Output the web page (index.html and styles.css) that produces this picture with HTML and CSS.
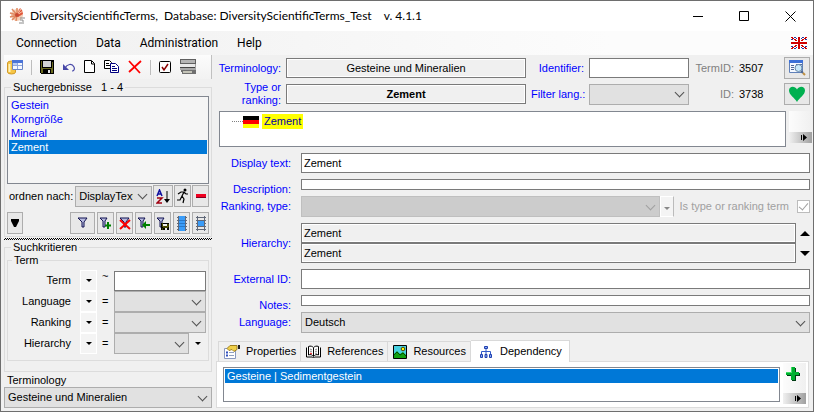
FILE: index.html
```html
<!DOCTYPE html>
<html lang="en">
<head>
    <meta charset="UTF-8">
    <meta name="viewport" content="width=device-width, initial-scale=1.0">
    <title>DiversityScientificTerms</title>
    <link rel="stylesheet" href="styles.css">
</head>
<body>
<div class="window">
    <header class="titlebar">
        <svg class="app-icon" width="17" height="17" viewBox="0 0 17 17">
            <circle cx="8" cy="7" r="6" fill="#f3cdb4"/>
            <path d="M8 7L1 5M8 7L3 1M8 7L8 0M8 7L1 9M8 7L3 12M8 7L7 13" stroke="#e08a62" stroke-width="1.5"/>
            <path d="M8 6L11 0L13 2L14 6L9 9Z" fill="#e0563a"/>
            <path d="M8 7L14 3M8 7L12 1" stroke="#f7c9b0"/>
            <circle cx="8" cy="7" r="2" fill="#c84a32"/>
            <path d="M11 10h5M11 12h3M14 12v4M10 15h3" stroke="#8a8a8a"/>
        </svg>
        <h1>DiversityScientificTerms,&nbsp; Database: DiversityScientificTerms_Test &nbsp;&nbsp; v. 4.1.1</h1>
        <button class="win-btn" aria-label="Minimize"><svg width="11" height="11"><path d="M0 5.5h10" stroke="#000"/></svg></button>
        <button class="win-btn" aria-label="Maximize"><svg width="11" height="11"><path d="M.5.5h9v9h-9z" fill="none" stroke="#000"/></svg></button>
        <button class="win-btn" aria-label="Close"><svg width="11" height="11"><path d="M.5.5l10 10M10.500 .5l-10 10" stroke="#000"/></svg></button>
    </header>

    <nav class="menubar">
        <a href="#">Connection</a>
        <a href="#">Data</a>
        <a href="#">Administration</a>
        <a href="#">Help</a>
        <button class="flag-btn" aria-label="English">
            <svg width="16" height="12" viewBox="0 0 16 12" shape-rendering="crispEdges">
                <path fill="#fff" d="M0 0h16v12H0z"/>
                <path fill="#2038a0" d="M3 0h2v1H3zM11 0h2v1h-2zM0 2h2v1H0zM14 2h2v1h-2zM0 9h2v1H0zM14 9h2v1h-2zM3 11h2v1H3zM11 11h2v1h-2zM5 1h1v1H5zM10 1h1v1h-1zM5 10h1v1H5zM10 10h1v1h-1z"/>
                <path fill="#d00000" d="M0 0h2v1H0zM1 1h2v1H1zM3 2h2v1H3zM4 3h2v1H4zM14 0h2v1h-2zM13 1h2v1h-2zM11 2h2v1h-2zM10 3h2v1h-2zM0 11h2v1H0zM1 10h2v1H1zM3 9h2v1H3zM4 8h2v1H4zM14 11h2v1h-2zM13 10h2v1h-2zM11 9h2v1h-2zM10 8h2v1h-2zM7 0h2v12H7zM0 5h16v2H0z"/>
            </svg>
        </button>
    </nav>

    <div class="content">
        <aside class="sidebar">
            <div class="toolbar">
                <button aria-label="Database">
                    <svg width="16" height="16" viewBox="0 0 16 16">
                        <path d="M.5 4q0-2 4-2t4 2v9q0 2-4 2t-4-2z" fill="#f6c544" stroke="#d09a2c"/>
                        <path d="M2.500 5v8" stroke="#fff2b8" stroke-width="2"/>
                        <path d="M5.500 1.500h10v9h-10z" fill="#f4f8ff" stroke="#6a86c8"/>
                        <path d="M5 1h11v3H5z" fill="#4a74d8"/><path d="M6 6.500h9M10.500 4v6" stroke="#8ea4dc"/>
                        <path d="M6 4h4v2H6z" fill="#b8ccf4"/>
                    </svg>
                </button>
                <span class="separator"></span>
                <button aria-label="Save">
                    <svg width="14" height="14" viewBox="0 0 14 14" shape-rendering="crispEdges">
                        <path fill="#000" d="M0 0h14v14H1l-1-1z"/><path fill="#6c6c20" d="M1 1h1v7h10V2h1v11h-2V9H3v4H1z"/>
                        <path fill="#d4d4d4" d="M3 1h8v6H3z"/><path fill="#e4e4e4" d="M8 10h2v3H8z"/>
                    </svg>
                </button>
                <button aria-label="Undo">
                    <svg width="14" height="14" viewBox="0 0 14 14">
                        <path d="M3 8c2-4 7-5 9-1 1 2 0 4-2 4" fill="none" stroke="#4848a8" stroke-width="1.200"/>
                        <path fill="#4848a8" d="M1 4v6h6z"/>
                    </svg>
                </button>
                <button aria-label="New">
                    <svg width="12" height="14" viewBox="0 0 12 14">
                        <path d="M.5.5h7l3 3v9H.5z" fill="#fff" stroke="#000"/><path d="M7.500 1v3h3" fill="none" stroke="#000"/>
                    </svg>
                </button>
                <button aria-label="Copy">
                    <svg width="16" height="14" viewBox="0 0 16 14">
                        <path d="M.5.5h5l2 2v6h-7z" fill="#fff" stroke="#000"/><path d="M2 3.500h3M2 5.500h4" stroke="#000"/>
                        <path d="M6.500 3.500h5l3 3v6h-8z" fill="#fff" stroke="#000080"/><path d="M8 6.500h3M8 8.500h5M8 10.500h5" stroke="#000080"/>
                    </svg>
                </button>
                <button aria-label="Delete">
                    <svg width="14" height="14" viewBox="0 0 14 14"><path d="M1 1l11 12M13 1L1 12" stroke="#f00" stroke-width="1.800"/></svg>
                </button>
                <span class="separator"></span>
                <button aria-label="Check">
                    <svg width="13" height="13" viewBox="0 0 13 13">
                        <rect x=".5" y=".5" width="11" height="11" rx="1" fill="#fff" stroke="#000"/><path d="M3 6l2 3 4-6" fill="none" stroke="#8b0000" stroke-width="1.500"/>
                    </svg>
                </button>
                <button aria-label="Print">
                    <svg width="16" height="16" viewBox="0 0 16 16" shape-rendering="crispEdges">
                        <path fill="#606060" d="M0 0h16v5H0z"/><path fill="#b4b4b4" d="M1 1h14v3H1z"/>
                        <path fill="#e8e8e8" d="M0 5h15v3H0z"/><path fill="#a0a0a0" d="M15 5h1v6h-1z"/>
                        <path fill="#444" d="M0 8h15v1H0z"/><path fill="#a8a8a8" d="M0 9h16v2H0z"/>
                        <path fill="#707070" d="M1 11h15v4H2v-2H1z"/><path fill="#c4c4b8" d="M3 12h9v2H3z"/>
                    </svg>
                </button>
            </div>

            <fieldset class="group results">
                <legend>Suchergebnisse&nbsp;&nbsp; 1 - 4</legend>
                <select class="listbox result-list" size="5" aria-label="Suchergebnisse">
                    <option>Gestein</option>
                    <option>Korngröße</option>
                    <option>Mineral</option>
                    <option selected>Zement</option>
                </select>
                <div class="order-row">
                    <label for="order">ordnen nach:</label>
                    <span class="combo">
                        <select id="order"><option>DisplayText</option></select>
                    </span>
                    <button class="btn wide" aria-label="Sort A to Z">
                        <svg width="14" height="15" viewBox="0 0 14 15">
                            <path d="M1 7l2.500-6L6 7M2 5h3" fill="none" stroke="#1010a0" stroke-width="1.500"/>
                            <path d="M1 9h5l-5 5h5" fill="none" stroke="#a00010" stroke-width="1.500"/>
                            <path d="M11 2v10" stroke="#000"/><path d="M8 10h6l-3 4z"/>
                        </svg>
                    </button>
                    <button class="btn" aria-label="Run">
                        <svg width="13" height="16" viewBox="0 0 13 16">
                            <circle cx="9" cy="2" r="1.500"/>
                            <path d="M8 4L6 8l2 3-1 4M6 8l-2 4H1M2 6l3-2h3l2 2h2" fill="none" stroke="#000" stroke-width="1.200"/>
                        </svg>
                    </button>
                    <button class="btn" aria-label="Remove">
                        <svg width="10" height="4"><path fill="#800020" d="M0 1h10v3H0z"/><path fill="#f00020" d="M0 0h10v3H0z"/></svg>
                    </button>
                </div>
                <div class="filter-row">
                    <button class="btn first" aria-label="More"><svg width="8" height="8"><path d="M0 0h8v2L5 8H3L0 2z"/></svg></button>
                    <button class="btn wider" aria-label="Filter">
                        <svg width="12" height="12" viewBox="0 0 12 12"><path d="M1 1h9L7 5v5H5V5z" fill="#b8bce0" stroke="#101050"/></svg>
                    </button>
                    <button class="btn" aria-label="Add to filter">
                        <svg width="13" height="13" viewBox="0 0 13 13"><path d="M1 1h7L6 4v6H4V4z" fill="#b8bce0" stroke="#101050"/><path d="M9 5v7M6 8.500h6" stroke="#008000" stroke-width="2"/></svg>
                    </button>
                    <button class="btn" aria-label="Clear filter">
                        <svg width="12" height="13" viewBox="0 0 12 13"><path d="M1 1h9L7 5v5H5V5z" fill="#b8bce0" stroke="#101050"/><path d="M1 3l10 9M11 3L1 12" stroke="#f00" stroke-width="2"/></svg>
                    </button>
                    <button class="btn" aria-label="Restore filter">
                        <svg width="13" height="13" viewBox="0 0 13 13"><path d="M1 1h7L6 4v6H4V4z" fill="#b8bce0" stroke="#101050"/><path d="M5 8l4-4v3h4v2H9v3z" fill="#008000"/></svg>
                    </button>
                    <button class="btn" aria-label="Save filter">
                        <svg width="13" height="13" viewBox="0 0 13 13"><path d="M1 1h7L6 4v6H4V4z" fill="#b8bce0" stroke="#101050"/><path d="M5 6h8v7H5z"/><path d="M6 7h1v3h5V7M6 12h1" fill="none" stroke="#808000"/><path d="M7 7h4v2H7zM9 11h2v2H9z" fill="#eee"/></svg>
                    </button>
                    <button class="btn" aria-label="All rows">
                        <svg width="10" height="15" viewBox="0 0 10 15" shape-rendering="crispEdges"><path fill="#3a9cf8" d="M1 0h8v15H1z"/><path d="M0 1.500h2M8 1.500h2M0 4.500h2M8 4.500h2M0 7.500h2M8 7.500h2M0 10.500h2M8 10.500h2M0 13.500h2M8 13.500h2M1.500 0v15M8.500 0v15" stroke="#606878"/><path d="M2 4.500h6M2 7.500h6M2 10.500h6" stroke="#2878c8"/></svg>
                    </button>
                    <button class="btn" aria-label="Some rows">
                        <svg width="10" height="15" viewBox="0 0 10 15" shape-rendering="crispEdges"><path fill="#3a9cf8" d="M2 5h6v5H2z"/><path d="M0 1.500h10M0 4.500h10M0 7.500h2M8 7.500h2M0 10.500h10M0 13.500h10M1.500 0v15M8.500 0v15" stroke="#606878"/></svg>
                    </button>
                </div>
            </fieldset>

            <div class="splitter"></div>

            <fieldset class="group criteria">
                <legend>Suchkritieren</legend>
                <fieldset class="group term">
                    <legend>Term</legend>
                    <label for="c-term">Term</label>
                    <button class="drop" aria-label="Term operator"></button>
                    <span class="op tilde">~</span>
                    <input id="c-term" type="text">

                    <label for="c-lang">Language</label>
                    <button class="drop" aria-label="Language operator"></button>
                    <span class="op">=</span>
                    <span class="combo"><select id="c-lang"></select></span>

                    <label for="c-rank">Ranking</label>
                    <button class="drop" aria-label="Ranking operator"></button>
                    <span class="op">=</span>
                    <span class="combo"><select id="c-rank"></select></span>

                    <label for="c-hier">Hierarchy</label>
                    <button class="drop" aria-label="Hierarchy operator"></button>
                    <span class="op">=</span>
                    <div class="with-drop">
                        <span class="combo"><select id="c-hier"></select></span>
                        <button class="drop flat" aria-label="Hierarchy list"></button>
                    </div>
                </fieldset>
            </fieldset>

            <label class="terminology-label" for="terminology">Terminology</label>
            <span class="combo">
                <select id="terminology"><option>Gesteine und Mineralien</option></select>
            </span>
        </aside>

        <main class="main">
            <div class="head">
                <label for="h-terminology">Terminology:</label>
                <input id="h-terminology" class="readonly" type="text" value="Gesteine und Mineralien" readonly>
                <label for="identifier">Identifier:</label>
                <input id="identifier" type="text">
                <span class="muted">TermID:</span>
                <span class="value">3507</span>
                <button class="btn" aria-label="Find in table">
                    <svg width="17" height="16" viewBox="0 0 17 16">
                        <path d="M.5.5h13v12H.5z" fill="#f4f8ff" stroke="#6080b8"/><path d="M0 0h14v3H0z" fill="#3c70d8"/>
                        <path d="M2 5.500h3M2 7.500h3M2 9.500h3M7 4.500h6" stroke="#506898"/>
                        <circle cx="9.500" cy="8" r="3.500" fill="#c8e8fa" stroke="#6888a8"/>
                        <path d="M12 11l2 2" stroke="#506890" stroke-width="2"/><path d="M14 13l2 2" stroke="#c09040" stroke-width="2"/>
                    </svg>
                </button>

                <label for="h-type">Type or ranking:</label>
                <input id="h-type" class="readonly strong" type="text" value="Zement" readonly>
                <label for="filter-lang">Filter lang.:</label>
                <span class="combo"><select id="filter-lang"></select></span>
                <span class="muted">ID:</span>
                <span class="value">3738</span>
                <button class="btn" aria-label="Favourite">
                    <svg width="16" height="16" viewBox="0 0 16 16"><path fill="#00b050" d="M8 16C6 12 0 9 0 4.500 0 0 6-.5 8 3.500 10-.5 16 0 16 4.500 16 9 10 12 8 16z"/></svg>
                </button>
            </div>

            <div class="tree-row">
                <div class="tree">
                    <span class="branch"></span>
                    <svg width="16" height="12" shape-rendering="crispEdges"><path d="M0 0h16v4H0z"/><path fill="#f00" d="M0 4h16v4H0z"/><path fill="#ff0" d="M0 8h16v4H0z"/></svg>
                    <a href="#" class="node">Zement</a>
                </div>
                <div class="strip">
                    <button class="overflow" aria-label="More tools"><svg width="7" height="7"><path d="M0 1h1v5H0zM2 0l4 3.500L2 7z"/></svg></button>
                </div>
            </div>

            <div class="form">
                <label for="display-text">Display text:</label>
                <input id="display-text" type="text" value="Zement">

                <label for="description">Description:</label>
                <textarea id="description"></textarea>

                <label for="ranking">Ranking, type:</label>
                <div class="ranking-row">
                    <span class="combo disabled"><select id="ranking" disabled></select></span>
                    <button class="drop grey" aria-label="Ranking list" disabled></button>
                    <label for="is-type">Is type or ranking term</label>
                    <input id="is-type" type="checkbox" checked disabled>
                </div>

                <label class="mid" for="hierarchy">Hierarchy:</label>
                <div class="hierarchy">
                    <input id="hierarchy" class="readonly" type="text" value="Zement" readonly>
                    <button class="arrow" aria-label="Up"><svg width="10" height="5"><path d="M5 0l5 5H0z"/></svg></button>
                    <input class="readonly" type="text" value="Zement" aria-label="Hierarchy, top down" readonly>
                    <button class="arrow" aria-label="Down"><svg width="10" height="5"><path d="M0 0h10L5 5z"/></svg></button>
                </div>

                <label for="external-id">External ID:</label>
                <input id="external-id" type="text">

                <label for="notes">Notes:</label>
                <textarea id="notes"></textarea>

                <label for="language">Language:</label>
                <span class="combo"><select id="language"><option>Deutsch</option></select></span>
            </div>

            <div class="tabs" role="tablist">
                <button class="tab" role="tab">
                    <svg width="16" height="15" viewBox="0 0 16 15">
                        <path d="M.5 4.500h11v10H.5z" fill="#fff" stroke="#8898c0"/><path d="M2 8.500h2M2 11.500h2" stroke="#3050c0" stroke-width="2"/><path d="M5 8.500h5M5 11.500h5" stroke="#90a0c0"/>
                        <path d="M3 4.500l3-3h7v4l-3 2-2-2-3 1z" fill="#f0d048" stroke="#a08020"/><path d="M14 1h2v4h-2z" fill="#222"/>
                    </svg>
                    Properties
                </button>
                <button class="tab" role="tab">
                    <svg width="15" height="14" viewBox="0 0 15 14">
                        <path d="M.5 2.500v9.500h6l1 1 1-1h6V2.500" fill="#fff" stroke="#000"/>
                        <path d="M2.500 10V1.500c2-1 4 0 5 1 1-1 3-2 5-1V10c-2-1-4 0-5 1.500C6.500 10 4.500 9 2.500 10zM7.500 3v8" fill="#fff" stroke="#000"/>
                        <path d="M4 4l2 1M4 6l2 1M9 5l2-1M9 7l2-1M9 9l2-1" stroke="#888"/><path d="M4 8l2 1" stroke="#e00"/>
                    </svg>
                    References
                </button>
                <button class="tab" role="tab">
                    <svg width="14" height="14" viewBox="0 0 14 14">
                        <path d="M.5.5h13v13H.5z" fill="#48d0e0" stroke="#000"/><path d="M1 12V9l3-3 3 3 3-2 3 3v3H1z" fill="#10a010"/><path d="M1 10l3-3 3 3 3-2 3 3" fill="none" stroke="#005000"/>
                        <circle cx="10" cy="4" r="1.800" fill="#ff0" stroke="#504000"/>
                    </svg>
                    Resources
                </button>
                <button class="tab active" role="tab" aria-selected="true">
                    <svg width="12" height="12" viewBox="0 0 12 12">
                        <path d="M6 2v7M1.500 9V5.500h9V9" fill="none" stroke="#3058c8"/>
                        <path d="M4.500.5h3v2h-3zM.5 8.500h2v3h-2zM5 8.500h2v3H5zM9.500 8.500h2v3h-2z" fill="#88a8f0" stroke="#2040b0"/>
                    </svg>
                    Dependency
                </button>
            </div>
            <div class="tab-panel" role="tabpanel">
                <select class="listbox" size="2" aria-label="Dependency">
                    <option selected>Gesteine | Sedimentgestein</option>
                </select>
                <div class="strip">
                    <button class="add" aria-label="Add">
                        <svg width="14" height="14" viewBox="0 0 14 14" shape-rendering="crispEdges"><path fill="#003c14" d="M6 1h4v5h4v3h-4v5H6V9H1V6h5z"/><path fill="#00b030" d="M5 0h4v5h4v3H9v5H5V8H0V5h5z"/><path fill="#40e068" d="M5 0h1v6H0V5h5z"/></svg>
                    </button>
                    <button class="overflow" aria-label="More tools"><svg width="7" height="7"><path d="M0 1h1v5H0zM2 0l4 3.500L2 7z"/></svg></button>
                </div>
            </div>
        </main>
    </div>
</div>
</body>
</html>
```
FILE: styles.css
```css
* {
    box-sizing: border-box;
}
body {
    margin: 0;
    font-family: "Liberation Sans", Arial, sans-serif;
    font-size: 11px;
    line-height: 13px;
    color: #000;
}
button, input, select, textarea {
    font: inherit;
    color: inherit;
    margin: 0;
    padding: 0;
    border-radius: 0;
    min-width: 0;
}
button {
    display: flex;
    align-items: center;
    justify-content: center;
    border: none;
    background: none;
}
svg {
    display: block;
    flex: none;
}
.window {
    display: flex;
    flex-direction: column;
    min-height: 100vh;
    border: 1px solid #6e6e6e;
    background-color: #f0f0f0;
}

/* title and menu */
.titlebar {
    display: flex;
    align-items: center;
    height: 30px;
    padding-left: 8px;
    background-color: #fff;
}
.titlebar h1 {
    flex: 1;
    margin: 0 0 0 4px;
    font: 12px/16px Lato, sans-serif;
    white-space: nowrap;
}
.win-btn {
    width: 46px;
    height: 29px;
}
.menubar {
    display: flex;
    align-items: center;
    gap: 19px;
    height: 24px;
    padding: 0 6px 0 15px;
    background: linear-gradient(to right, #f0f0f0, #fcfcfc 75%);
    font: 12px/16px Roboto, sans-serif;
}
.menubar a {
    color: #000;
    text-decoration: none;
}
.flag-btn {
    margin-left: auto;
}
.content {
    display: flex;
    flex: 1;
    gap: 4px;
}

/* shared controls */
input[type="text"], textarea {
    display: block;
    width: 100%;
    height: 20px;
    padding: 0 2px;
    border: 1px solid #7a7a7a;
    background-color: #fff;
    resize: none;
    overflow: hidden;
}
input.readonly {
    background-color: #f0f0f0;
    box-shadow: inset 0 0 0 1px #fff;
}
.combo {
    display: grid;
    min-width: 0;
    height: 21px;
}
.combo select {
    grid-area: 1 / 1;
    width: 100%;
    padding: 0 18px 0 3px;
    appearance: none;
    border: 1px solid #adadad;
    background-color: #e1e1e1;
}
.combo::after {
    content: "";
    grid-area: 1 / 1;
    justify-self: end;
    align-self: center;
    width: 6px;
    height: 6px;
    margin: 0 6px 3px 0;
    border: solid #505050;
    border-width: 0 1px 1px 0;
    transform: rotate(45deg);
    pointer-events: none;
}
.combo.disabled select {
    background-color: #ccc;
    border-color: #bfbfbf;
    opacity: 1;
}
.combo.disabled::after {
    border-color: #a0a0a0;
}
.btn {
    width: 17px;
    height: 22px;
    border: 1px solid #adadad;
    background-color: #e8e8e8;
}
.btn.wide {
    width: 20px;
}
.drop {
    width: 17px;
    height: 21px;
    border: 1px solid #fff;
    background-color: #f4f4f4;
}
.drop::after {
    content: "";
    border: solid transparent;
    border-width: 3px 3px 0;
    border-top-color: #000;
}
.drop.flat {
    background: none;
    border: none;
}
.drop.grey {
    width: 14px;
    padding-top: 4px;
    border-right-color: #bbb;
}
.drop.grey::after {
    border-top-color: #888;
}
.listbox {
    display: block;
    padding: 1px;
    border: 1px solid #828790;
    background-color: #fff;
    overflow: hidden;
}
.listbox option {
    min-height: 0;
    height: 14px;
    padding: 1px 2px 0;
    line-height: 13px;
}
.listbox option:checked {
    background: linear-gradient(#0078d7, #0078d7);
    -webkit-text-fill-color: #fff;
}

/* search panel */
.sidebar {
    display: flex;
    flex-direction: column;
    width: 211px;
    padding-left: 3px;
}
.toolbar {
    display: flex;
    align-items: center;
    height: 24px;
    padding: 0 15px 0 3px;
    justify-content: space-between;
    border-right: 1px solid #c0c0c0;
    background: linear-gradient(#fcfcfc, #f2f2f2);
}
.separator {
    width: 1px;
    height: 15px;
    background-color: #bdbdbd;
}
.group {
    min-width: 0;
    margin: 0;
    padding: 0 2px;
    border: 1px solid #dcdcdc;
}
.group legend {
    height: 13px;
    margin-left: 4px;
    padding: 0 2px;
}
.results {
    margin-top: 2px;
    padding-top: 2px;
    padding-bottom: 2px;
}
.result-list {
    width: 100%;
    height: 88px;
    background-color: #f5f5f5;
    color: #00f;
}
.order-row, .filter-row {
    display: flex;
    align-items: center;
    gap: 1px;
}
.order-row {
    margin-top: 1px;
}
.order-row label {
    margin-left: 2px;
    white-space: nowrap;
}
.order-row .combo {
    flex: 1;
    margin-left: 1px;
}
.filter-row {
    gap: 2px;
    margin-top: 5px;
}
.filter-row .first {
    width: 16px;
    margin-right: auto;
}
.filter-row .wider {
    width: 25px;
}
.splitter {
    height: 2px;
    margin-top: 1px;
    background: repeating-conic-gradient(#000 0 25%, #f0f0f0 0 50%) 0 0 / 2px 2px;
}
.criteria {
    margin-top: 1px;
    padding-bottom: 10px;
}
.term {
    display: grid;
    grid-template-columns: 72px 17px 17px 1fr;
    align-items: center;
    grid-auto-rows: 21px;
    padding: 3px 2px 6px 0;
}
.term label {
    padding-right: 9px;
    text-align: right;
}
.op {
    padding-left: 5px;
}
.tilde {
    align-self: start;
}
.with-drop {
    display: flex;
}
.with-drop .combo {
    flex: 1;
}
.terminology-label {
    margin-top: 2px;
    padding-left: 3px;
}

/* term details */
.main {
    flex: 1;
    min-width: 0;
    padding-right: 1px;
}
.head {
    display: grid;
    grid-template-columns: 65px 1fr 53px 100px 40px 40px 26px;
    grid-auto-rows: 26px;
    column-gap: 5px;
    align-items: center;
    padding-right: 2px;
}
.head label, .form > label {
    color: #00f;
    text-align: right;
}
.head .readonly {
    text-align: center;
}
.head .strong {
    font-weight: bold;
}
.head .btn {
    width: 26px;
}
.head label {
    white-space: nowrap;
}
.head label[for="h-type"] {
    padding-left: 20px;
    white-space: normal;
}
.muted {
    color: #808080;
    text-align: right;
}
.tree-row {
    display: flex;
    gap: 3px;
    margin-top: 4px;
    padding-left: 3px;
}
.tree {
    display: flex;
    align-items: flex-start;
    flex: 1;
    height: 36px;
    padding: 2px 12px;
    border: 1px solid #828790;
    background-color: #fff;
}
.tree .branch {
    width: 11px;
    margin-top: 7px;
    border-top: 1px dotted #808080;
}
.tree svg {
    margin-top: 2px;
}
.tree .node {
    margin-left: 3px;
    padding: 1px 2px;
    background-color: #ff0;
    color: #0000a0;
    text-decoration: none;
}
.strip {
    display: flex;
    flex-direction: column;
    width: 23px;
    height: 32px;
    background: linear-gradient(to right, #fcfcfc, #f0f0f0);
}
.overflow {
    height: 11px;
    margin-top: auto;
    padding-left: 7px;
    background: linear-gradient(to right, #f0f0f0, #a0a0a0);
}
.form {
    display: grid;
    grid-template-columns: 75px 1fr;
    grid-template-rows: 20px 11px 21px 40px 20px 11px 21px;
    gap: 6px 10px;
    margin-top: 6px;
    padding-right: 2px;
}
.form > label {
    padding-top: 4px;
    white-space: nowrap;
}
.form > label.mid {
    align-self: center;
    padding: 0;
}
.form textarea {
    height: 11px;
}
.ranking-row {
    display: flex;
    align-items: center;
}
.ranking-row .combo {
    flex: 1;
}
.ranking-row label {
    margin: 0 8px 0 6px;
    color: #a0a0a0;
}
.ranking-row input {
    appearance: none;
    display: grid;
    place-items: center;
    width: 13px;
    height: 13px;
    border: 1px solid #bcbcbc;
    background-color: #fff;
}
.ranking-row input:checked::after {
    content: "";
    width: 4px;
    height: 8px;
    margin-bottom: 2px;
    border: solid #a0a0a0;
    border-width: 0 1px 1px 0;
    transform: rotate(40deg);
}
.hierarchy {
    display: grid;
    grid-template-columns: 1fr 10px;
    column-gap: 4px;
}

/* tabs */
.tabs {
    display: flex;
    align-items: flex-end;
    margin-top: 7px;
    padding-left: 2px;
}
.tab {
    gap: 6px;
    height: 20px;
    padding: 0 4px 0 5px;
    border: 1px solid #d9d9d9;
    border-bottom: none;
    border-left: none;
    background-color: #f0f0f0;
}
.tab:first-child {
    border-left: 1px solid #d9d9d9;
}
.tab.active {
    gap: 8px;
    height: 22px;
    margin-bottom: -1px;
    padding: 0 7px 0 9px;
    background-color: #fff;
}
.tab-panel {
    display: flex;
    gap: 3px;
    margin-right: 3px;
    padding: 1px 2px 3px 6px;
    border: 1px solid #dcdcdc;
    background-color: #fff;
}
.tab-panel .listbox {
    flex: 1;
    height: 35px;
    margin-top: 4px;
}
.tab-panel .strip {
    height: 41px;
}
.add {
    height: 22px;
    padding-right: 3px;
}
```
